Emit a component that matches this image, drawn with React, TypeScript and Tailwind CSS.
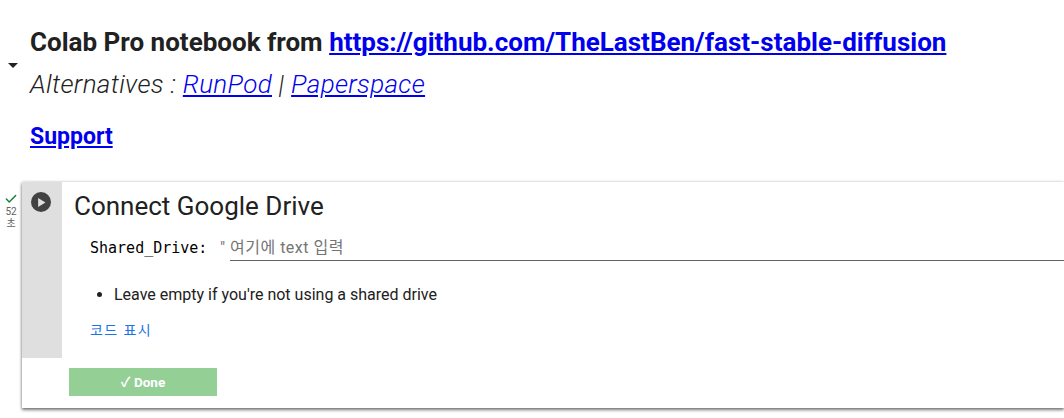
import { Check } from "lucide-react";

const sans = "font-['Roboto','Noto_Sans_CJK_KR',sans-serif]";

export default function App() {
  return (
    <div className={`${sans} h-[418px] w-[1064px] overflow-hidden bg-white text-[#212121]`}>
      <div className="flex h-[182px] items-start">
        <div className="w-[30px] pt-[63px] pl-[8px]">
          <div className="h-0 w-0 border-x-[5px] border-t-[5px] border-x-transparent border-t-[#212121]" />
        </div>
        <div className="pt-[25px]">
          <h1 className="text-[26px] leading-[34px] font-bold whitespace-nowrap">
            Colab Pro notebook from{" "}
            <a className="text-[#0000ee] underline" href="#">https://github.com/TheLastBen/fast-stable-diffusion</a>
          </h1>
          <p className="mt-[8px] text-[26px] leading-[34px] font-light tracking-[0.32px] whitespace-nowrap italic">
            Alternatives : <a className="text-[#0000ee] underline" href="#">RunPod</a> | <a className="text-[#0000ee] underline" href="#">Paperspace</a>
          </p>
          <h2 className="mt-[21px] text-[23px] leading-[30px] font-bold">
            <a className="text-[#0000ee] underline" href="#">Support</a>
          </h2>
        </div>
      </div>

      <div className="flex">
        <div className="flex w-[22px] flex-col items-center pt-[10px] text-[10px] leading-[12px] text-[#616161]">
          <Check className="h-[14px] w-[14px] text-[#188038]" strokeWidth={2.5} />
          <span>52</span>
          <span>초</span>
        </div>
        <div className="h-[226px] flex-1 shadow-[0_2px_3px_rgba(0,0,0,0.5),0_0_3px_rgba(0,0,0,0.2)]">
          <div className="flex h-[176px]">
            <div className="w-[40px] bg-[#dfdfdf] pt-[10px] pl-[9px]">
              <div className="flex h-[20px] w-[20px] items-center justify-center rounded-full bg-[#424242]">
                <svg viewBox="0 0 8 8" className="ml-[1px] h-[9px] w-[9px]">
                  <path d="M1 0 L7.5 4 L1 8 Z" fill="#e0e0e0" />
                </svg>
              </div>
            </div>
            <div className="flex-1 pl-[12px]">
              <h3 className="pt-[8px] text-[26px] leading-[32px]">Connect Google Drive</h3>
              <div className="mt-[13px] flex items-center pl-[16px]">
                <span className="w-[130px] font-['DejaVu_Sans_Mono',monospace] text-[15px] text-black">Shared_Drive:</span>
                <span className="w-[10px] text-[16px] text-[#757575]">"</span>
                <div className="flex-1 border-b border-[#616161] text-[16px] leading-[25px] tracking-[0.5px] text-[#757575]">여기에 text 입력</div>
              </div>
              <ul className="mt-[22px] list-disc pl-[40px] text-[16px] leading-[24px]">
                <li>Leave empty if you're not using a shared drive</li>
              </ul>
              <a className="mt-[13px] block pl-[16px] text-[14px] leading-[20px] tracking-[1.4px] text-[#1a73e8]" href="#">코드 표시</a>
            </div>
          </div>
          <div className="pt-[10px] pl-[47px]">
            <button className="flex h-[28px] w-[148px] items-center justify-center bg-[#94d095] text-[13.5px] font-bold text-white">✓ Done</button>
          </div>
        </div>
      </div>
    </div>
  );
}
